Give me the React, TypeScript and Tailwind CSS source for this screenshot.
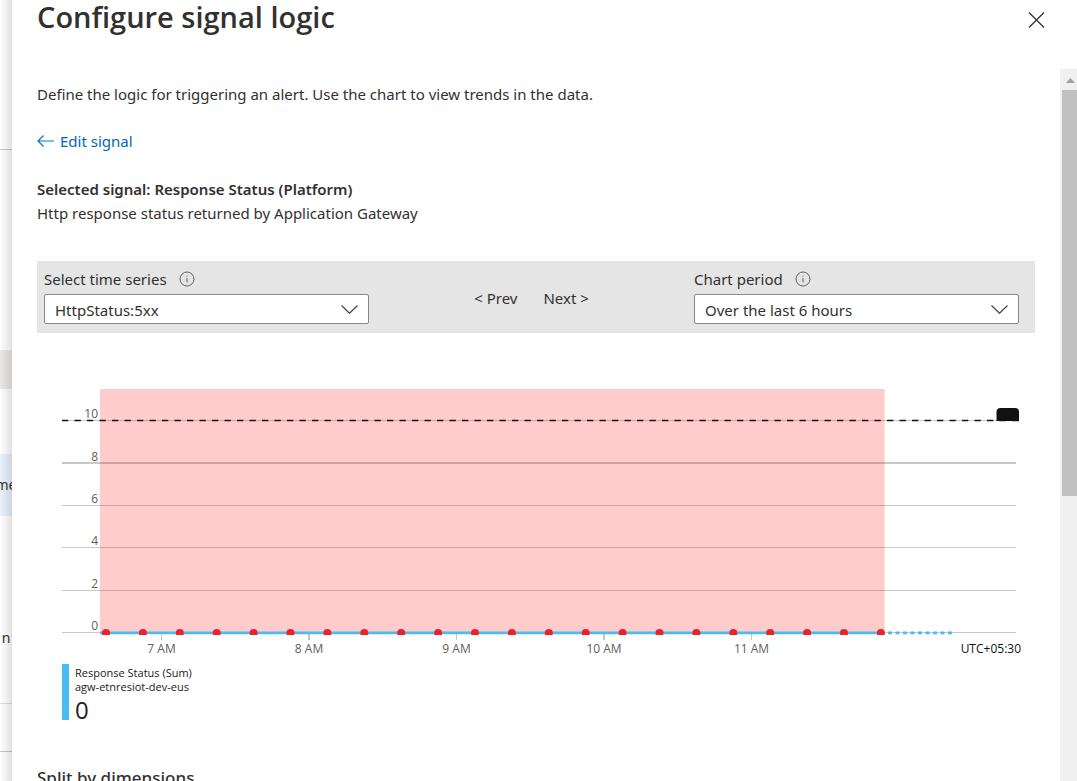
import React from 'react';

const seriesOptions = ['HttpStatus:5xx', 'HttpStatus:4xx', 'HttpStatus:3xx', 'HttpStatus:2xx'];
const periodOptions = ['Over the last 6 hours', 'Over the last 12 hours', 'Over the last day'];

const gridLines = [
  { label: '10', y: 39.5, width: 1 },
  { label: '8', y: 82, width: 2 },
  { label: '6', y: 124.5, width: 1 },
  { label: '4', y: 166.5, width: 1 },
  { label: '2', y: 209.5, width: 1 },
  { label: '0', y: 251.5, width: 1 }
];

const hours = [
  { label: '7 AM', x: 124.5, width: 1 },
  { label: '8 AM', x: 272, width: 2 },
  { label: '9 AM', x: 419.5, width: 1 },
  { label: '10 AM', x: 567, width: 2 },
  { label: '11 AM', x: 714.5, width: 1 }
];

const points = Array.from({ length: 22 }, (_, i) => 69 + i * 36.9);

const InfoIcon: React.FC = () => (
  <svg width="16" height="16" viewBox="0 0 16 16" fill="none" aria-hidden="true">
    <circle cx="8" cy="8" r="7" stroke="#605e5c" />
    <path d="M8 7v4.5M8 4.5v1" stroke="#605e5c" />
  </svg>
);

interface DropdownProps {
  id: string;
  label: string;
  options: string[];
}

const Dropdown: React.FC<DropdownProps> = ({ id, label, options }) => (
  <div>
    <div className="flex h-6 items-center gap-3">
      <label htmlFor={id}>{label}</label>
      <InfoIcon />
    </div>
    <div className="relative mt-[3px]">
      <select
        id={id}
        className="block h-[30px] w-full appearance-none rounded-xs border border-[#8a8886] bg-white pl-[10px] pr-9 pt-[2px] text-[#323130]"
      >
        {options.map((option) => (
          <option key={option}>{option}</option>
        ))}
      </select>
      <svg
        className="pointer-events-none absolute right-[11px] top-[11px]"
        width="17"
        height="9"
        viewBox="0 0 17 9"
        fill="none"
        aria-hidden="true"
      >
        <path d="M0.5 0.5l8 7.8 8-7.8" stroke="#484644" strokeWidth="1.2" />
      </svg>
    </div>
  </div>
);

const Chart: React.FC = () => (
  <svg
    viewBox="0 0 998 278"
    className="mt-12 block w-full font-['Open_Sans',sans-serif]"
    role="img"
    aria-label="Response Status (Sum)"
  >
    <defs>
      <clipPath id="plot">
        <rect x="0" y="0" width="998" height="254" />
      </clipPath>
    </defs>

    {gridLines.map((line) => (
      <g key={line.label}>
        <path d={`M25 ${line.y}H979`} stroke="#c8c8c8" strokeWidth={line.width} />
        <text x="61" y={Math.floor(line.y) - 2} textAnchor="end" fontSize="12" fill="#605e5c">
          {line.label}
        </text>
      </g>
    ))}

    {hours.map((hour) => (
      <g key={hour.label}>
        <path d={`M${hour.x} 253V259`} stroke="#c8c8c8" strokeWidth={hour.width} />
        <text x={hour.x} y="272" textAnchor="middle" fontSize="12" fill="#605e5c">
          {hour.label}
        </text>
      </g>
    ))}
    <text x="984" y="272" textAnchor="end" fontSize="12" fill="#111111">
      UTC+05:30
    </text>

    {/* breached range */}
    <rect x="63" y="8" width="784.6" height="243.5" fill="#ff0000" fillOpacity="0.2" />

    {/* threshold */}
    <path d="M25 39.5H982" stroke="#111111" strokeWidth="1.5" strokeDasharray="6.3 6.2" />
    <path d="M959.5 40V31a4 4 0 0 1 4-4h14.5a4 4 0 0 1 4 4v9z" fill="#111111" />

    <g clipPath="url(#plot)">
      <path d="M63 251.8H844" stroke="#47bdf5" strokeWidth="2.8" />
      <path d="M851 251.8H916" stroke="#47bdf5" strokeWidth="2.8" strokeDasharray="4 3.5" />
      {points.map((x) => (
        <circle key={x} cx={x} cy="252" r="4" fill="#ec222b" />
      ))}
    </g>
  </svg>
);

// The part of the page behind the panel that stays visible on its left
const PageBehind: React.FC = () => (
  <div className="relative w-3 shrink-0 overflow-hidden bg-white text-sm text-[#323130]">
    <div className="h-[150px] border-b border-[#c8c6c4]" />
    <div className="h-[200px]" />
    <div className="h-[39px] bg-[#e9e8e6]" />
    <div className="h-[65px]" />
    <div className="flex h-[62px] items-center justify-center bg-[#e9f1fc]">me</div>
    <div className="flex h-[188px] items-center justify-center border-b border-[#e1dfdd] pt-[56px]">n</div>
    <div className="h-12 border-b border-[#c8c6c4]" />
    <div className="absolute inset-0 bg-linear-to-r from-black/0 to-black/12" />
  </div>
);

const ScrollBar: React.FC = () => (
  <div className="flex w-[17px] shrink-0 flex-col bg-[#f0f0f0]">
    <svg className="h-[21px] w-full" viewBox="0 0 17 21" aria-hidden="true">
      <path d="M6 14l4.5-5 4.5 5z" fill="#a0a0a0" />
    </svg>
    <div className="ml-[2px] h-[57%] bg-[#c1c1c1]" />
  </div>
);

const App: React.FC = () => {
  return (
    <div className="flex h-screen overflow-hidden bg-white font-['Noto_Sans','Open_Sans',sans-serif] text-[15px] leading-6 text-[#323130]">
      <PageBehind />

      <main className="flex min-w-0 flex-1 flex-col">
        <header className="flex h-[69px] shrink-0 items-start justify-between pl-[25px] pr-8">
          <h1 className="font-['Open_Sans',sans-serif] text-[29px] font-semibold leading-[34px]">
            Configure signal logic
          </h1>
          <button type="button" aria-label="Close" className="mt-3">
            <svg width="17" height="16" viewBox="0 0 17 16" fill="none">
              <path d="M1 0.5l15 15M16 0.5l-15 15" stroke="#323130" strokeWidth="1.3" />
            </svg>
          </button>
        </header>

        <div className="flex min-h-0 flex-1">
          <div className="min-w-0 flex-1 overflow-hidden px-[25px] pt-[13px]">
            <p>Define the logic for triggering an alert. Use the chart to view trends in the data.</p>

            <a href="#signals" className="mt-[23px] flex items-center gap-[6px] text-[#0067b8]">
              <svg width="17" height="12" viewBox="0 0 17 12" fill="none" aria-hidden="true">
                <path d="M17 6H1M6.5 0.5L1 6l5.5 5.5" stroke="#0078d4" strokeWidth="1.2" />
              </svg>
              Edit signal
            </a>

            <h2 className="mt-6 font-semibold">Selected signal: Response Status (Platform)</h2>
            <p>Http response status returned by Application Gateway</p>

            <div className="mt-9 grid h-[72px] grid-cols-3 bg-[#e5e5e5] pl-[7px] pr-4 pt-[6px]">
              <Dropdown id="series" label="Select time series" options={seriesOptions} />
              <div className="flex items-start justify-center gap-[26px] pt-[19px]">
                <button type="button">&lt; Prev</button>
                <button type="button">Next &gt;</button>
              </div>
              <Dropdown id="period" label="Chart period" options={periodOptions} />
            </div>

            <Chart />

            <div className="ml-[25px] mt-[5px] h-14 w-fit border-l-[7px] border-[#47bdf5] pl-[6px] pt-[2px] font-['Open_Sans',sans-serif] text-[#222222]">
              <p className="text-[11px] font-medium leading-[14px]">Response Status (Sum)</p>
              <p className="text-[11px] leading-[14px]">agw-etnresiot-dev-eus</p>
              <p className="text-[24px] leading-8">0</p>
            </div>

            <h2 className="mt-[46px] text-[17px] font-medium">Split by dimensions</h2>
          </div>

          <ScrollBar />
        </div>
      </main>
    </div>
  );
};

export default App;
